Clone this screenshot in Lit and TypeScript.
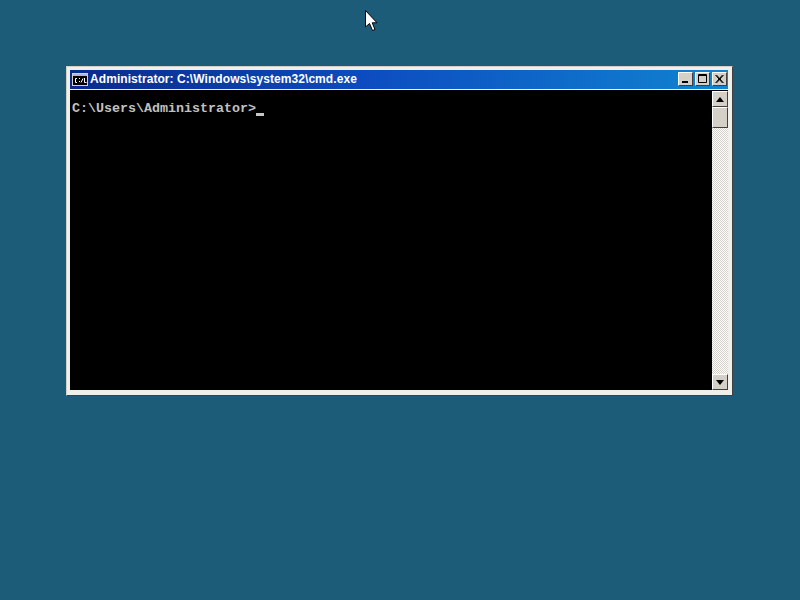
import { LitElement, html, css } from "lit";
import { customElement } from "lit/decorators.js";

@customElement("app-root")
export class AppRoot extends LitElement {
  static styles = css`
    :host { display: block; }
    .desktop {
      position: relative; width: 800px; height: 600px; box-sizing: border-box;
      background: #1c5c79; padding: 66px 0 0 66px; overflow: hidden;
    }
    .pointer { position: absolute; left: 365px; top: 10px; width: 13px; height: 21px; }
    .window {
      width: 667px; height: 330px; box-sizing: border-box; background: #f0f0ea;
      border: 1px solid; border-color: #d4d0c8 #404040 #404040 #d4d0c8;
      padding: 3px 4px 5px 3px; display: flex; flex-direction: column; gap: 1px;
    }
    .title {
      height: 19px; flex: none; display: flex; align-items: center; gap: 2px; padding: 0 1px 1px 2px;
      box-sizing: border-box;
      background: linear-gradient(90deg, #0a2a8c 0%, #0c4cc0 45%, #1084d0 100%);
    }
    .icon { width: 16px; height: 13px; flex: none; display: block; }
    .name {
      flex: 1; color: #fff; font: bold 12px "Liberation Sans", sans-serif; letter-spacing: 0.07px;
      white-space: nowrap;
    }
    .controls { display: flex; gap: 2px; }
    .btn {
      box-sizing: border-box; width: 15px; height: 14px; background: #d4d0c8; display: block;
      border: 1px solid; border-color: #fff #404040 #404040 #fff;
    }
    .body { flex: 1; display: flex; min-height: 0; background: #000; }
    .console {
      flex: 1; color: #c0c0c0; padding: 11px 2px;
      font: bold 13.33px/16px "Liberation Mono", monospace; white-space: pre; display: flex;
      align-items: flex-start;
    }
    .caret { width: 8px; height: 3px; background: #c6c6c6; margin-top: 12px; }
    .bar {
      width: 16px; flex: none; display: flex; flex-direction: column; margin-top: 1px;
      background-image: conic-gradient(#d4d0c8 25%, #fff 0 50%, #d4d0c8 0 75%, #fff 0);
      background-size: 2px 2px;
    }
    .sb {
      box-sizing: border-box; width: 16px; height: 16px; flex: none; background: #d4d0c8;
      border: 1px solid; border-color: #fff #404040 #404040 #fff;
      display: flex; align-items: center; justify-content: center;
    }
    .thumb { height: 21px; }
    .spacer { flex: 1; }
    .sb svg { display: block; }
  `;

  render() {
    return html`
      <div class="desktop">
        <div class="window">
          <div class="title">
            <svg class="icon" viewBox="0 0 16 13">
              <rect x="0.5" y="0.5" width="15" height="12" fill="#000" stroke="#d4d0c8"/>
              <rect x="1" y="1" width="14" height="2" fill="#a8b8e0"/>
              <path d="M5 5.5H3.5V9.5H5M7.5 5V6M7.5 8V9M9 9.5L11 5.5M12.5 5V9.5H14.5" stroke="#fff" fill="none"/>
            </svg>
            <span class="name">Administrator: C:\\Windows\\system32\\cmd.exe</span>
            <div class="controls">
              <svg class="btn" viewBox="0 0 13 12"><rect x="3" y="8" width="6" height="2" fill="#000"/></svg>
              <svg class="btn" viewBox="0 0 13 12"><path d="M2.5 1.5H10.5V9.5H2.5Z M2 2.5H11" fill="none" stroke="#000"/></svg>
              <svg class="btn" viewBox="0 0 13 12"><path d="M2.5 2L9.5 10M3.5 2L10.5 10M9.5 2L2.5 10M10.5 2L3.5 10" stroke="#000" fill="none"/></svg>
            </div>
          </div>
          <div class="body">
            <div class="console"><span>C:\\Users\\Administrator&gt;</span><span class="caret"></span></div>
            <div class="bar">
              <div class="sb"><svg width="8" height="5" viewBox="0 0 8 5"><path d="M4 0L8 5H0Z" fill="#000"/></svg></div>
              <div class="sb thumb"></div>
              <div class="spacer"></div>
              <div class="sb"><svg width="8" height="5" viewBox="0 0 8 5"><path d="M0 0H8L4 5Z" fill="#000"/></svg></div>
            </div>
          </div>
        </div>
        <svg class="pointer" viewBox="0 0 13 21">
          <path d="M0.5 0.5V17L4.5 13.5L7.5 20.5L10 19.5L7.2 12.8H12Z" fill="#fff" stroke="#000" stroke-width="1"/>
        </svg>
      </div>
    `;
  }
}
